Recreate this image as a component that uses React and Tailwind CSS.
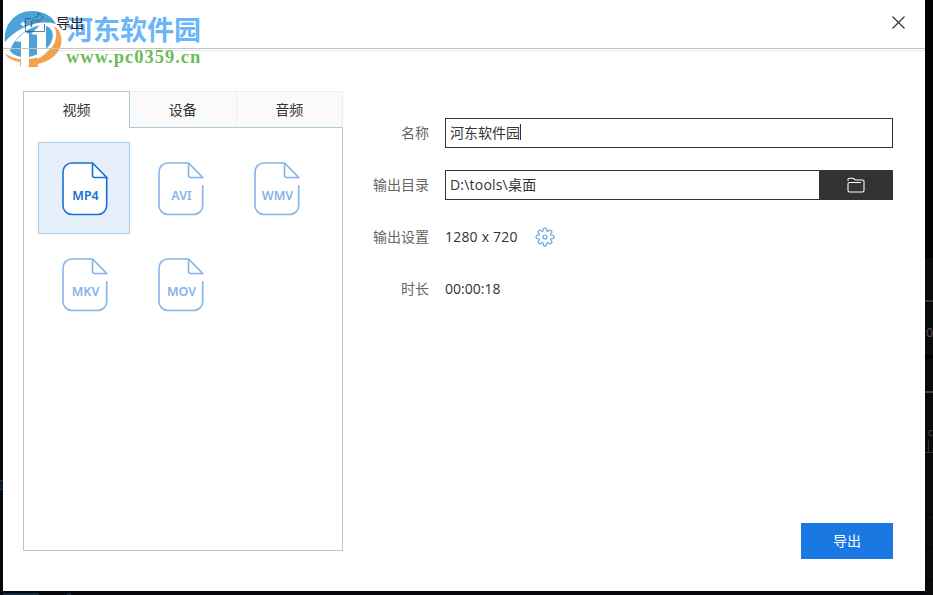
const FORMATS = ['MP4', 'AVI', 'WMV', 'MKV', 'MOV'];
const TABS = ['视频', '设备', '音频'];

function FormatTile({ name, selected }) {
  return (
    <button
      className={`flex h-[92px] w-[92px] items-center justify-center border pt-0.5 ${
        selected ? 'border-[#a9c9e2] bg-[#e6f0fb] text-[#1a6fd4]' : 'border-transparent text-[#86b3ea]'
      }`}
    >
      <svg width="48" height="54" viewBox="0 0 48 54" fill="none" stroke="currentColor" strokeWidth="1.6" className="ml-[3px]">
        {selected && (
          <path d="M10 1h20.500L44.700 15.500V43.500a9 9 0 0 1-9 9H10a9 9 0 0 1-9-9V10a9 9 0 0 1 9-9z" fill="#fff" stroke="none" />
        )}
        <path
          d={
            selected
              ? 'M44.700 15.500V43.500a9 9 0 0 1-9 9H10a9 9 0 0 1-9-9V10a9 9 0 0 1 9-9h20.500L44.700 15.500H32.500a2 2 0 0 1-2-2V1'
              : 'M44.700 23V43.500a9 9 0 0 1-9 9H10a9 9 0 0 1-9-9V10a9 9 0 0 1 9-9h20.500L44.700 15.500H32.500a2 2 0 0 1-2-2V1'
          }
        />
        <text
          x="23.500"
          y="37.500"
          textAnchor="middle"
          fill="currentColor"
          stroke="none"
          className="font-['Noto_Sans'] text-[12.5px] font-semibold"
        >
          {name}
        </text>
      </svg>
    </button>
  );
}

function Field({ label, children }) {
  return (
    <div className="flex h-[30px] items-center">
      <span className="w-[86px] shrink-0 pb-0.5 pr-4 text-right text-[#666]">{label}</span>
      {children}
    </div>
  );
}

function GearIcon() {
  return (
    <svg width="20" height="20" viewBox="0 0 20 20" fill="none" stroke="#5b9fe0" strokeWidth="1.1" strokeLinejoin="round">
      <path d="M8 4.200 8.500 1.500Q10 .6 11.500 1.500L12 4.200 12.700 4.500 15 2.900Q16.600 3.400 17.100 5L15.500 7.300 15.800 8 18.500 8.500Q19.400 10 18.500 11.500L15.800 12 15.500 12.700 17.100 15Q16.600 16.600 15 17.100L12.700 15.500 12 15.800 11.500 18.500Q10 19.400 8.500 18.500L8 15.800 7.300 15.500 5 17.100Q3.400 16.600 2.900 15L4.500 12.700 4.200 12 1.500 11.500Q.6 10 1.500 8.500L4.200 8 4.500 7.300 2.900 5Q3.400 3.400 5 2.900L7.300 4.500z" />
      <circle cx="10" cy="10" r="2" />
    </svg>
  );
}

function FolderIcon() {
  return (
    <svg width="18" height="16" viewBox="0 0 18 16" fill="none" stroke="#fff" strokeWidth="1.100" strokeLinecap="round">
      <path d="M1 3.500V2.500Q1 1.300 2.200 1.300H5.500Q6.500 1.300 7.200 2.200T8.800 3H15.500Q17 3 17 4.500V13.500Q17 15 15.500 15H2.500Q1 15 1 13.500V7Q1 5.500 2.500 5.500H13.500" />
    </svg>
  );
}

function Watermark() {
  return (
    <div className="pointer-events-none absolute left-0 top-2 flex">
      <svg width="62" height="60" viewBox="0 0 62 60">
        <path d="M2 34C0 16 13 3 29 3C40 3 49 8 53 16C34 11 14 20 2 34z" fill="#4ba3d8" />
        <path d="M7 43C10 30 29 15 43 18C53 21 51 34 43 41C36 47 26 50 18 49C13 48 9 46 7 43z" fill="#4ba3d8" />
        <path d="M51 18C62 25 60 41 51 48C46 53 39 55 35 56V59H25V51C44 50 59 34 51 18z" fill="#f3a14f" />
        <path d="M2 45C8 50 15 52 25 51V58H17V54C10 53 4 50 2 45z" fill="#f3a14f" />
        <path d="M12 33L22 24L26 26V58H18V34z" fill="#fff" />
        <path d="M28 26L38 16L43 18V45Q39 49 34 51V27z" fill="#fff" />
        <path d="M20 13l1 2 2 1-2 1-1 2-1-2-2-1 2-1z" fill="#fff" />
      </svg>
      <div className="ml-px flex flex-col pt-[3px]">
        <span className="h-9 whitespace-nowrap font-['Noto_Sans_CJK_SC',sans-serif] text-[27px] font-bold leading-9 text-[#6bb5fb]">
          河东软件园
        </span>
        <span className="whitespace-nowrap font-['Liberation_Serif',serif] text-[18.500px] font-bold leading-5 tracking-[1px] text-[#6dbb5c]">
          www.pc0359.cn
        </span>
      </div>
    </div>
  );
}

function Header() {
  return (
    <header className="relative z-10 flex h-[49px] shrink-0 items-center justify-between border-b border-[#c3c5c5] pb-1 pl-[21px] pr-[20px]">
      <div className="flex items-center gap-2">
        <svg width="24" height="22" viewBox="0 0 24 22" fill="none" stroke="#2f5573" strokeOpacity=".75" strokeWidth="1">
          <path d="M7 7.500H1.500V20.500H20.500V13M7 16Q7 6 14 5.500V1.500L19 6.500 14 11.500V9Q9 9 7 16" />
        </svg>
        <span className="text-[#222]">导出</span>
      </div>
      <button aria-label="关闭">
        <svg width="13" height="13" viewBox="0 0 13 13" stroke="#333" strokeWidth="1.200">
          <path d="M.5.5l12 12M12.500.5l-12 12" />
        </svg>
      </button>
    </header>
  );
}

// Sliver of the editor window visible beside the dialog
function EditorEdge() {
  return (
    <div className="flex w-2 flex-col overflow-hidden bg-[#0b0b0b] font-['Open_Sans'] text-[12px] leading-4 text-[#555]">
      <div className="h-[258px] shrink-0 bg-black" />
      <div className="h-[44px] shrink-0 border-b-2 border-[#333]" />
      <div className="flex h-[54px] shrink-0 justify-end border-b border-black pt-[23px]">:0</div>
      <div className="h-[37px] shrink-0 border-b-2 border-[#444] border-t-[3px] border-t-black" />
      <div className="flex h-[60px] shrink-0 flex-col justify-end border-b border-[#333] pl-[3px]">
        <span className="text-[10px]">c</span>
        <div className="h-3 border-l border-[#333]" />
      </div>
      <div className="h-[62px] shrink-0 border-b border-black" />
      <div className="h-[33px] shrink-0 border-b border-black" />
      <div className="h-[33px] shrink-0 border-b border-black" />
    </div>
  );
}

export default function App() {
  return (
    <div className="flex h-[595px] w-[933px] overflow-hidden bg-[#07080c] font-['Open_Sans','Noto_Sans_CJK_SC',sans-serif] text-[14px] text-[#333]">
      <div className="w-[3px] shrink-0 pt-[480px]">
        <div className="h-2.5 border-y border-[#1f3c5c] bg-[#0e1b2b]" />
      </div>
      <div className="flex w-[922px] shrink-0 flex-col">
        <main className="relative flex h-[591px] shrink-0 flex-col bg-white">
          <Header />
          <div className="mt-px h-px shrink-0 bg-[#e8eaea]" />
          <div className="flex flex-1 pl-5 pr-8">
            <section className="mt-10 flex h-[460px] w-[320px] shrink-0 flex-col">
              <div className="flex h-[37px] shrink-0">
                {TABS.map((tab, i) => (
                  <button
                    key={tab}
                    className={
                      i === 0
                        ? 'w-[107px] border border-b-0 border-[#a9cbdc] pb-0.5'
                        : 'flex-1 border-b border-r border-t border-b-[#a9cbdc] border-r-[#e9eded] border-t-[#e9eded] bg-[#fafafa]'
                    }
                  >
                    {tab}
                  </button>
                ))}
              </div>
              <div className="flex flex-1 flex-wrap content-start gap-1 border border-t-0 border-[#a9cbdc] pl-3.5 pt-3.5">
                {FORMATS.map((name) => (
                  <FormatTile key={name} name={name} selected={name === 'MP4'} />
                ))}
              </div>
            </section>

            <section className="flex flex-1 flex-col pl-4">
              <div className="mt-[67px] flex flex-col gap-[22px]">
                <Field label="名称">
                  <div className="flex h-[30px] flex-1 items-center border border-[#333] pb-0.5 pl-1">
                    <span>河东软件园</span>
                    <span className="h-4 w-px bg-[#333]" />
                  </div>
                </Field>
                <Field label="输出目录">
                  <div className="flex h-[30px] flex-1 items-center border border-r-0 border-[#333] pb-0.5 pl-1 tracking-[0.200px]">
                    D:\tools\桌面
                  </div>
                  <button className="flex h-[30px] w-[74px] items-center justify-center bg-[#333]" aria-label="浏览">
                    <FolderIcon />
                  </button>
                </Field>
                <Field label="输出设置">
                  <span className="mr-[17px] pb-0.5 tracking-[0.200px]">1280 x 720</span>
                  <GearIcon />
                </Field>
                <Field label="时长">
                  <span className="pb-0.5">00:00:18</span>
                </Field>
              </div>
              <button className="mb-8 mt-auto h-9 w-[92px] self-end bg-[#1a78e2] pb-0.5 text-white">导出</button>
            </section>
          </div>
          <Watermark />
        </main>
        <div className="flex gap-7 pt-0.5">
          <div className="h-0.5 w-9 bg-[#16283a]" />
          <div className="h-0.5 w-1 bg-[#16283a]" />
        </div>
      </div>
      <EditorEdge />
    </div>
  );
}
